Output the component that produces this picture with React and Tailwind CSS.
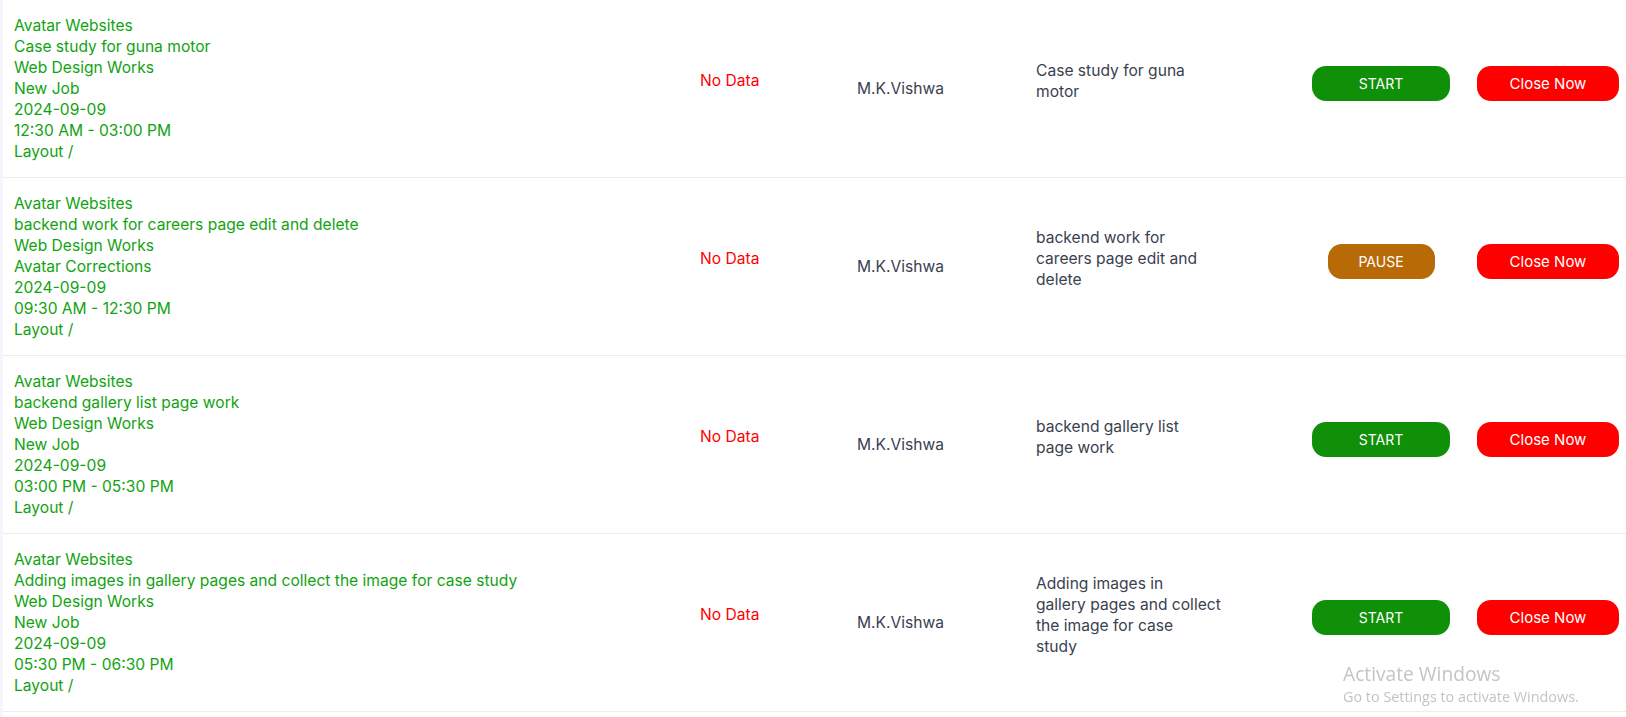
import React from 'react';

const jobs = [
  {
    id: 1,
    client: 'Avatar Websites',
    title: 'Case study for guna motor',
    note: 'Case study for guna\nmotor',
    category: 'Web Design Works',
    type: 'New Job',
    date: '2024-09-09',
    time: '12:30 AM - 03:00 PM',
    stage: 'Layout /',
    assignee: 'M.K.Vishwa',
    status: 'start',
  },
  {
    id: 2,
    client: 'Avatar Websites',
    title: 'backend work for careers page edit and delete',
    note: 'backend work for\ncareers page edit and\ndelete',
    category: 'Web Design Works',
    type: 'Avatar Corrections',
    date: '2024-09-09',
    time: '09:30 AM - 12:30 PM',
    stage: 'Layout /',
    assignee: 'M.K.Vishwa',
    status: 'pause',
  },
  {
    id: 3,
    client: 'Avatar Websites',
    title: 'backend gallery list page work',
    note: 'backend gallery list\npage work',
    category: 'Web Design Works',
    type: 'New Job',
    date: '2024-09-09',
    time: '03:00 PM - 05:30 PM',
    stage: 'Layout /',
    assignee: 'M.K.Vishwa',
    status: 'start',
  },
  {
    id: 4,
    client: 'Avatar Websites',
    title: 'Adding images in gallery pages and collect the image for case study',
    note: 'Adding images in\ngallery pages and collect\nthe image for case\nstudy',
    category: 'Web Design Works',
    type: 'New Job',
    date: '2024-09-09',
    time: '05:30 PM - 06:30 PM',
    stage: 'Layout /',
    assignee: 'M.K.Vishwa',
    status: 'start',
  },
];

export default function App() {
  return (
    <div
      className="min-h-[717px] bg-[#f4f6fb] pl-[3px] text-[15.6px] leading-[21px]"
      style={{ fontFamily: 'Inter, "Liberation Sans", sans-serif' }}
    >
      <div className="bg-white min-h-[717px]">
        {jobs.map(job => (
          <div
            key={job.id}
            className="grid grid-cols-[685px_157px_179px_272px_170px_1fr] border-b border-[#ececec]"
          >
            {/* job details */}
            <div className="pl-[11px] py-[15px] text-[#12a312]">
              <div>{job.client}</div>
              <div>{job.title}</div>
              <div>{job.category}</div>
              <div>{job.type}</div>
              <div>{job.date}</div>
              <div>{job.time}</div>
              <div>{job.stage}</div>
            </div>

            <div className="pl-3 flex items-center">
              <p className="mb-4 text-[#ff0000]">No Data</p>
            </div>

            <div className="pl-3 flex items-center text-[#3a4150]">
              {job.assignee}
            </div>

            <div className="pl-3 flex items-center text-[#3a4150]">
              <p className="mb-4 whitespace-pre-line">{job.note}</p>
            </div>

            <div className="flex items-center justify-center">
              <div className="mb-[10px]">
                {job.status === 'pause' ? (
                  <button className="w-[107px] h-[35px] rounded-[14px] bg-[#b86a06] text-white text-[14px]">
                    PAUSE
                  </button>
                ) : (
                  <button className="w-[138px] h-[35px] rounded-[14px] bg-[#0f9008] text-white text-[14px]">
                    START
                  </button>
                )}
              </div>
            </div>

            <div className="pl-[11px] flex items-center">
              <button className="mb-[10px] w-[142px] h-[35px] rounded-[14px] bg-[#ff0000] text-white text-[15px]">
                Close Now
              </button>
            </div>
          </div>
        ))}
      </div>

      {/* windows watermark */}
      <div
        className="fixed left-[1343px] top-[661px] text-[#c4c4c4] pointer-events-none"
        style={{ fontFamily: '"Open Sans", "Noto Sans", sans-serif' }}
      >
        <div className="text-[19.2px] leading-[26px]">Activate Windows</div>
        <div className="text-[14.4px] leading-[20px]">Go to Settings to activate Windows.</div>
      </div>
    </div>
  );
}
